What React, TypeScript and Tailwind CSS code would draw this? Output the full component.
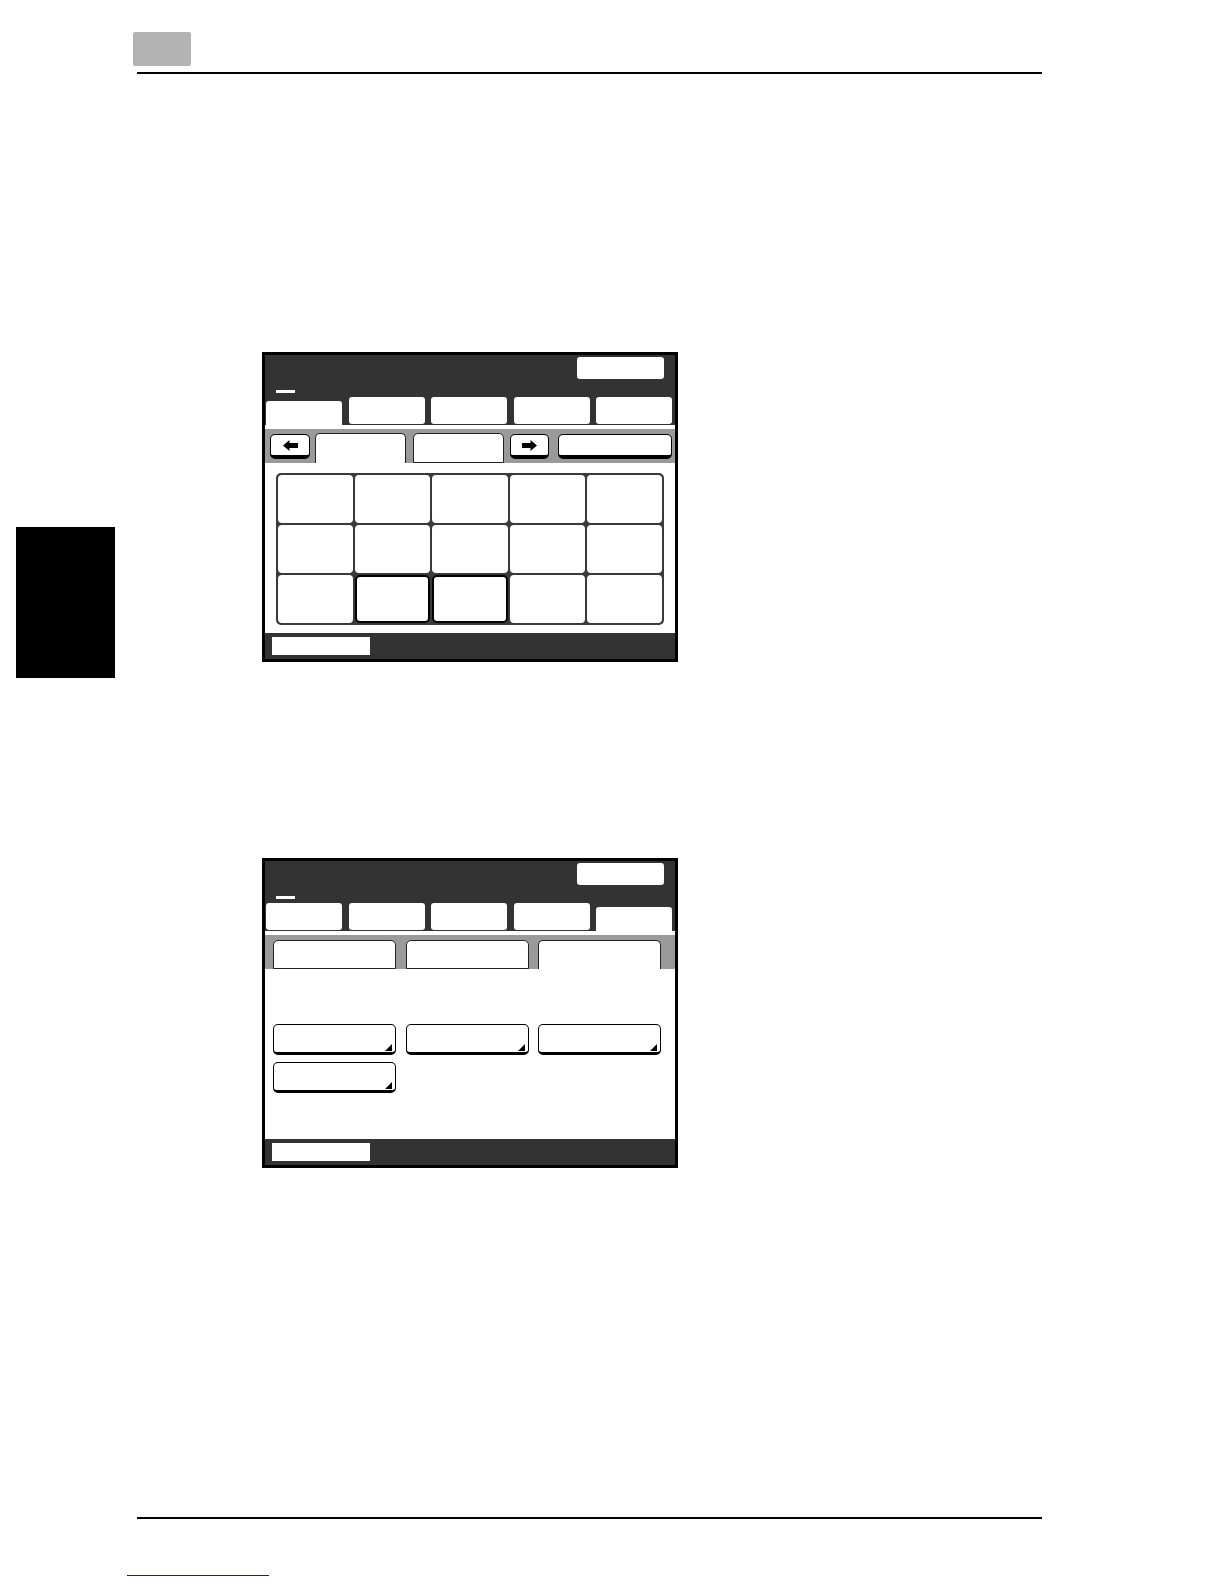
import React from "react";

const DARK = "bg-[#333333]";

function HeaderTab({ active }: { active: boolean }) {
  if (active) return <div className="w-[76px] h-[24px] bg-white rounded-t-[3px]" />;
  return <div className="w-[76px] h-[27px] mb-[1px] bg-white rounded-[3px]" />;
}

function ArrowIcon({ dir }: { dir: "left" | "right" }) {
  return (
    <svg width="15" height="11" viewBox="0 0 15 11">
      {dir === "left" ? (
        <polygon points="0,5.5 6.5,0 6.5,3 15,3 15,8 6.5,8 6.5,11" fill="#000" />
      ) : (
        <polygon points="15,5.5 8.5,0 8.5,3 0,3 0,8 8.5,8 8.5,11" fill="#000" />
      )}
    </svg>
  );
}

function RaisedButton({ w, children }: { w: string; children?: React.ReactNode }) {
  return (
    <div
      className={`${w} self-start mt-[5px] h-[25px] bg-white border-[1.5px] border-b-[4px] border-black rounded-[5px] flex items-center justify-center`}
    >
      {children}
    </div>
  );
}

function SubTab({ w, active, h }: { w: string; active: boolean; h: string }) {
  return active ? (
    <div className={`${w} ${h} bg-white border-[1.5px] border-b-0 border-[#222] rounded-t-[5px]`} />
  ) : (
    <div className={`${w} ${h} bg-white border-[1.5px] border-[#222] rounded-t-[5px]`} />
  );
}

function ScreenHeader({ activeTab }: { activeTab: number }) {
  return (
    <>
      <div className={`h-[70px] ${DARK} flex flex-col`}>
        <div className="flex justify-end pt-[2px] pr-[11px]">
          <div className="w-[87px] h-[22px] bg-white rounded-[3px]" />
        </div>
        <div className="ml-[11px] mt-[11px] w-[19px] h-[3px] bg-white" />
        <div className="mt-auto flex items-end gap-[6.5px] px-[1px]">
          {[0, 1, 2, 3, 4].map((i) => (
            <HeaderTab key={i} active={i === activeTab} />
          ))}
        </div>
      </div>
      <div className="h-[4px] bg-white" />
    </>
  );
}

function BottomBar() {
  return (
    <div className={`h-[26px] ${DARK} flex items-center pl-[7px]`}>
      <div className="w-[98px] h-[18px] bg-white" />
    </div>
  );
}

function ScreenOne() {
  const selected = [11, 12];
  return (
    <div className="w-[416px] h-[310px] border-[3px] border-black flex flex-col bg-white">
      <ScreenHeader activeTab={0} />
      <div className="h-[34px] bg-[#9a9a9a] flex items-end pl-[5px] pr-[3px]">
        <RaisedButton w="w-[40px]">
          <ArrowIcon dir="left" />
        </RaisedButton>
        <div className="ml-[5px]">
          <SubTab w="w-[91px]" h="h-[30px]" active />
        </div>
        <div className="ml-[7px]">
          <SubTab w="w-[91px]" h="h-[30px]" active={false} />
        </div>
        <div className="ml-[6px] self-start">
          <RaisedButton w="w-[39px]">
            <ArrowIcon dir="right" />
          </RaisedButton>
        </div>
        <div className="ml-[9px] self-start">
          <RaisedButton w="w-[114px]" />
        </div>
      </div>
      <div className="h-[170px] px-[11px] pt-[10px]">
        <div className="h-[152px] grid grid-cols-5 grid-rows-3 gap-[2px] p-[2px] bg-[#3a3a3a] rounded-[5px]">
          {Array.from({ length: 15 }).map((_, i) =>
            selected.includes(i) ? (
              <div key={i} className="bg-white rounded-[5px] border-[2.5px] border-black" />
            ) : (
              <div key={i} className="bg-white rounded-[4px]" />
            )
          )}
        </div>
      </div>
      <BottomBar />
    </div>
  );
}

function MenuButton() {
  return (
    <div className="w-[123px] h-[31px] bg-white border-[1.5px] border-b-[3px] border-black rounded-[5px] flex items-end justify-end pr-[3px] pb-[1px]">
      <svg width="7" height="7" viewBox="0 0 7 7">
        <polygon points="7,0 7,7 0,7" fill="#000" />
      </svg>
    </div>
  );
}

function ScreenTwo() {
  return (
    <div className="w-[416px] h-[310px] border-[3px] border-black flex flex-col bg-white">
      <ScreenHeader activeTab={4} />
      <div className="h-[34px] bg-[#9a9a9a] flex items-end gap-[9.5px] pl-[8px]">
        <SubTab w="w-[123px]" h="h-[29px]" active={false} />
        <SubTab w="w-[123px]" h="h-[29px]" active={false} />
        <SubTab w="w-[123px]" h="h-[29px]" active />
      </div>
      <div className="h-[170px] pt-[55px] pl-[8px] flex flex-col gap-[7px]">
        <div className="flex gap-[9.5px]">
          <MenuButton />
          <MenuButton />
          <MenuButton />
        </div>
        <div className="flex">
          <MenuButton />
        </div>
      </div>
      <BottomBar />
    </div>
  );
}

export default function App() {
  return (
    <div className="w-[1224px] h-[1584px] bg-white flex flex-col font-['Liberation_Sans',sans-serif]">
      <div className="pt-[32px] pl-[133px]">
        <div className="w-[58px] h-[34px] bg-[#b3b3b3] rounded-[2px]" />
      </div>
      <div className="mt-[6px] ml-[137px] w-[905px] h-[2px] bg-black" />

      <div className="flex">
        <div className="w-[262px] shrink-0">
          <div className="mt-[453px] ml-[16px] w-[99px] h-[151px] bg-black" />
        </div>
        <div className="flex flex-col">
          <div className="mt-[278px]">
            <ScreenOne />
          </div>
          <div className="mt-[196px]">
            <ScreenTwo />
          </div>
        </div>
      </div>

      <div className="mt-auto">
        <div className="ml-[137px] w-[905px] h-[2px] bg-black" />
        <div className="mt-[56px] ml-[127px] w-[142px] h-[1px] bg-[#1a1a9a]" />
        <div className="h-[8px]" />
      </div>
    </div>
  );
}
